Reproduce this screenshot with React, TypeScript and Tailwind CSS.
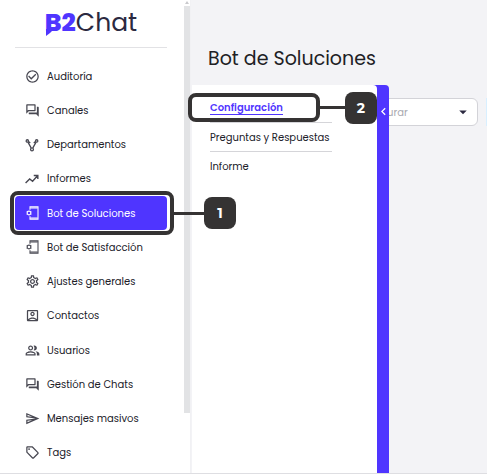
import { useState } from 'react';
import type { ReactNode } from 'react';
import clsx from 'clsx';
import {
  MdArrowDropDown,
  MdCheckCircleOutline,
  MdChevronLeft,
  MdOutlineAccountBox,
  MdOutlineForum,
  MdOutlinePeopleAlt,
  MdOutlineSell,
  MdOutlineSend,
  MdOutlineSettings,
} from 'react-icons/md';

const DepartmentsIcon = () => (
  <svg viewBox="0 0 24 24" className="size-3.5" fill="none" stroke="currentColor" strokeWidth="2.2">
    <circle cx="4" cy="5" r="2" />
    <circle cx="20" cy="5" r="2" />
    <circle cx="12" cy="19.5" r="2.4" />
    <path d="M5 7l5.5 10M19 7l-5.5 10" />
    <path d="M6 6l3 2.5M18 6l-3 2.5" />
  </svg>
);

const ReportsIcon = () => (
  <svg viewBox="0 0 24 24" className="size-3.5" fill="none" stroke="currentColor" strokeWidth="2.4">
    <path d="M1 19l7-7 5 4 8-9M15 6h7v6" />
  </svg>
);

const BotIcon = () => (
  <svg viewBox="0 0 24 24" className="size-4" fill="none" stroke="currentColor" strokeWidth="1.6">
    <path d="M7.5 7V2.8h12V21.2h-12V17" />
    <path d="M8 4.4h11M8 19.6h11" />
    <circle cx="6" cy="12" r="2.8" />
    <path d="M2.2 10.2l1.4.6M2.2 13.8l1.4-.6M8.6 10.8l1.4-.6M8.6 13.2l1.4.6" strokeWidth="1.2" />
  </svg>
);

interface MenuItem {
  label: string;
  icon: ReactNode;
}

const menu: MenuItem[] = [
  { label: 'Auditoría', icon: <MdCheckCircleOutline size={15} /> },
  { label: 'Canales', icon: <MdOutlineForum size={15} /> },
  { label: 'Departamentos', icon: <DepartmentsIcon /> },
  { label: 'Informes', icon: <ReportsIcon /> },
  { label: 'Bot de Soluciones', icon: <BotIcon /> },
  { label: 'Bot de Satisfacción', icon: <BotIcon /> },
  { label: 'Ajustes generales', icon: <MdOutlineSettings size={15} /> },
  { label: 'Contactos', icon: <MdOutlineAccountBox size={15} /> },
  { label: 'Usuarios', icon: <MdOutlinePeopleAlt size={15} /> },
  { label: 'Gestión de Chats', icon: <MdOutlineForum size={15} /> },
  { label: 'Mensajes masivos', icon: <MdOutlineSend size={15} /> },
  { label: 'Tags', icon: <MdOutlineSell size={15} /> },
];

const sections = ['Configuración', 'Preguntas y Respuestas', 'Informe'];

// Connector line and numbered badge, placed to the right of a highlighted item
const Step = ({ number, lineClass }: { number: number; lineClass: string }) => (
  <span className="pointer-events-none absolute left-full top-1/2 z-30 flex -translate-y-1/2 items-center">
    <span className={clsx('h-[3px] bg-[#353333]', lineClass)} />
    <span className="flex size-8 items-center justify-center rounded-lg bg-[#353333] font-['Montserrat','Poppins','Inter',sans-serif] text-sm font-bold text-white">
      {number}
    </span>
  </span>
);

const Logo = () => (
  <div className="relative flex text-[25px] leading-7 text-[#2b2940]">
    <span className="font-extrabold text-[#4f35ff]">B2</span>
    <span>Chat</span>
    <svg viewBox="0 0 8 8" className="absolute left-px top-5 size-2 text-[#4f35ff]" fill="currentColor">
      <path d="M0 0h8L4 4 0 7z" />
    </svg>
  </div>
);

const Sidebar = () => (
  <aside className="flex w-[191px] shrink-0 border-r border-[#f1f1f4] bg-white">
    <div className="flex min-w-0 flex-1 flex-col pb-[3px] pl-[15px] pr-4">
      <div className="flex h-12 justify-center border-b border-[#e2e2e5] pt-[9px]">
        <Logo />
      </div>
      <nav className="flex flex-1 flex-col pt-[11px]">
        {menu.map(({ label, icon }) => {
          const active = label === 'Bot de Soluciones';
          return (
            <a
              key={label}
              href="#"
              className={clsx(
                'relative flex flex-1 items-center rounded pl-2.5 text-[10px]',
                active ? 'bg-[#4f35ff] text-white' : 'text-[#202028]'
              )}
            >
              <span className={clsx('flex w-[22px]', !active && 'text-[#484852]')}>{icon}</span>
              {label}
              {active && (
                <span className="pointer-events-none absolute -bottom-[5px] -left-[5px] -right-[7px] -top-[5px] rounded-lg border-4 border-[#353333]">
                  <span className="absolute -right-1 top-1/2">
                    <Step number={1} lineClass="w-[30px]" />
                  </span>
                </span>
              )}
            </a>
          );
        })}
      </nav>
    </div>
    <div className="flex w-[7px] flex-col items-center">
      <svg viewBox="0 0 6 6" className="size-1.5 text-[#c9c9cc]" fill="currentColor">
        <path d="M1 4l2-3 2 3z" />
      </svg>
      <div className="h-[86%] w-1.5 bg-[#e2e3e5]" />
    </div>
  </aside>
);

const App = () => {
  const [open, setOpen] = useState(true);

  return (
    <div className="flex h-screen min-h-[440px] overflow-hidden border-b border-[#dedee2] bg-[#f3f3f6] font-['Poppins','Inter',sans-serif]">
      <Sidebar />
      <main className="relative flex min-w-0 flex-1 flex-col">
        <h1 className="px-[17px] pb-6 pt-[45px] text-[19px] leading-7 text-[#202024]">Bot de Soluciones</h1>
        <div className="mt-px flex justify-end gap-2">
          <div className="relative w-36">
            <select
              aria-label="Acción"
              className="h-7 w-full appearance-none rounded-md border border-[#d3d3d8] bg-white pl-[19px] text-[10px] text-[#a9a9b0]"
            >
              <option>Configurar</option>
            </select>
            <MdArrowDropDown size={18} className="pointer-events-none absolute right-1.5 top-[5px] text-[#2b2940]" />
          </div>
          <div className="w-px bg-[#d8efff]" />
        </div>

        <div className="absolute bottom-0 left-px top-[85px] z-10 flex rounded-tr bg-[#4f35ff]">
          {open && (
            <nav className="w-[185px] rounded-tr bg-white pl-[18px] pr-[45px] pt-[9px]">
              {sections.map((section) => {
                const active = section === 'Configuración';
                return (
                  <a
                    key={section}
                    href="#"
                    className="relative flex h-[29px] items-center whitespace-nowrap border-b border-[#d5d5d9] text-[10px] text-[#202028] last:border-b-0"
                  >
                    <span className={clsx(active && 'border-b border-[#4f35ff] font-semibold leading-[13px] text-[#4f35ff]')}>
                      {section}
                    </span>
                    {active && (
                      <span className="pointer-events-none absolute -left-[22px] -top-px bottom-0 right-[12px] rounded-lg border-4 border-[#353333]">
                        <span className="absolute -right-1 top-1/2">
                          <Step number={2} lineClass="w-[25px]" />
                        </span>
                      </span>
                    )}
                  </a>
                );
              })}
            </nav>
          )}
          <button
            onClick={() => setOpen(!open)}
            aria-label={open ? 'Ocultar menú' : 'Mostrar menú'}
            className="flex w-3 justify-center pt-[19px] text-white"
          >
            <MdChevronLeft size={15} className={clsx('shrink-0', !open && 'rotate-180')} />
          </button>
        </div>
      </main>
    </div>
  );
};

export default App;
